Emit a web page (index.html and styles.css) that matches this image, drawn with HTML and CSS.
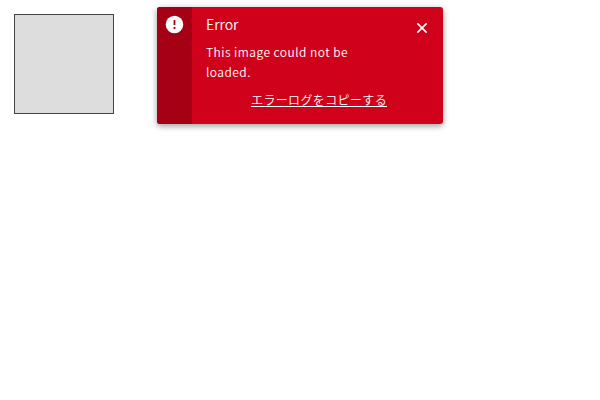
FILE: index.html
```html
<!DOCTYPE html>
<html lang="ja">
<head>
<meta charset="utf-8">
<title>Error</title>
<link rel="stylesheet" href="styles.css">
</head>
<body>
<div class="page">
  <div class="thumbnail"></div>
  <div class="toast" role="alert">
    <div class="toast-side">
      <svg class="toast-icon" viewBox="0 0 18 18"><circle cx="8.5" cy="8.5" r="8.75" fill="#fff"/><path d="M8.5 4.1v5M8.5 10.9v2" stroke="#a50013" stroke-width="1.8"/></svg>
    </div>
    <div class="toast-body">
      <div class="toast-text">
        <div class="toast-title">Error</div>
        <div class="toast-message">This image could not be loaded.</div>
      </div>
      <a class="toast-link">エラーログをコピーする</a>
    </div>
    <button class="toast-close" aria-label="Close"><svg viewBox="0 0 10 10"><path d="M.3.3l9.4 9.4M9.7.3L.3 9.7" stroke="#fff" stroke-width="1.6"/></svg></button>
  </div>
</div>
</body>
</html>
```

FILE: styles.css
```css
* { box-sizing: border-box; }
body {
  margin: 0;
  background: #fff;
  font-family: "Noto Sans CJK JP", sans-serif;
  font-weight: 350;
}
.page { padding: 14px; }
.thumbnail {
  width: 100px;
  height: 100px;
  background: #ddd;
  border: 1px solid #444;
}
.toast {
  position: absolute;
  top: 7px;
  left: 157px;
  width: 286px;
  height: 117px;
  display: flex;
  overflow: hidden;
  border-radius: 3px;
  background: #d0021b;
  color: #fff;
  box-shadow: 0 2px 6px rgba(0, 0, 0, .4);
}
.toast-side {
  width: 35px;
  padding: 9px;
  background: #a50013;
}
.toast-icon { display: block; width: 18px; height: 18px; overflow: visible; }
.toast-body {
  width: 195px;
  padding: 7px 0 0 14px;
  display: flex;
  flex-direction: column;
}
.toast-title { font-size: 14px; line-height: 21px; }
.toast-message {
  width: 170px;
  margin-top: 7px;
  font-size: 12px;
  line-height: 20px;
  letter-spacing: .46px;
}
.toast-link {
  align-self: flex-end;
  margin-top: 8px;
  font-size: 12px;
  line-height: 20px;
  letter-spacing: .36px;
  text-decoration: underline;
  white-space: nowrap;
}
.toast-close {
  margin: 16px 0 0 30px;
  width: 10px;
  height: 10px;
  padding: 0;
  border: 0;
  background: none;
}
.toast-close svg { display: block; width: 10px; height: 10px; }
```
